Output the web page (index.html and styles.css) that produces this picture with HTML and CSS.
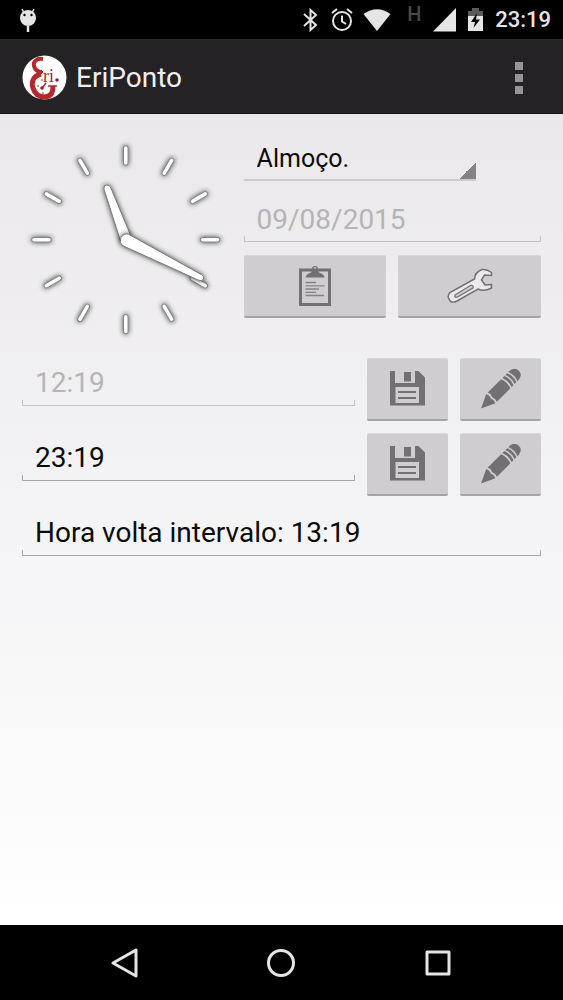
FILE: index.html
```html
<!DOCTYPE html>
<html lang="pt-BR">
<head>
<meta charset="utf-8">
<meta name="viewport" content="width=device-width, initial-scale=1">
<title>EriPonto</title>
<link rel="stylesheet" href="styles.css">
</head>
<body>
<svg class="sprite" aria-hidden="true">
  <symbol id="save" viewBox="0 0 35 35">
    <path fill="#737073" fill-rule="evenodd" d="M0 0H5V12H25V0H28.500L35 6.500V34.500H0ZM5.500 16V32H29V16Z"/>
    <path fill="#737073" d="M14 1H21V10.500H14ZM8 20H26V22H8ZM8 26H26V28H8Z"/>
  </symbol>
  <symbol id="pencil" viewBox="0 0 40 40">
    <g transform="translate(0 39.500) rotate(-45)" fill="#737073">
      <path d="M0 0L14 -6.500Q15.500 -3 14 0Q15.500 3 14 6.500Z"/>
      <path d="M16 -6.500H35Q37.500 0 35 6.500H16Q17.500 3 16 0Q17.500 -3 16 -6.500Z"/>
      <path d="M36.800 -6.500H39.500Q42 0 39.500 6.500H36.800Q39.300 0 36.800 -6.500Z"/>
      <path d="M41 -6.500H43.500Q46 0 43.500 6.500H41Q43.500 0 41 -6.500Z"/>
      <path d="M45.200 -6.500H47Q53.500 -5.500 53.500 0Q53.500 5.500 47 6.500H45.200Q47.700 0 45.200 -6.500Z"/>
    </g>
  </symbol>
</svg>

<header class="status">
  <svg class="droid" width="18" height="24" viewBox="0 0 18 24" aria-hidden="true">
    <path d="M3 1L5 5M15 1L13 5" stroke="#e6e4e6" stroke-width="1.500"/>
    <circle cx="9" cy="10" r="8" fill="#e6e4e6"/>
    <circle cx="5.500" cy="7" r="1.200"/><circle cx="12.500" cy="7" r="1.200"/>
    <path d="M9 18V24" stroke="#e6e4e6" stroke-width="2.500"/>
  </svg>
  <div class="signals">
    <svg width="18" height="24" viewBox="0 0 18 24" fill="none" stroke="#e6e4e6" stroke-width="2" aria-hidden="true">
      <path d="M1 6L13 17L7.500 22V2L13 7L1 18"/>
    </svg>
    <svg width="22" height="24" viewBox="0 0 22 24" fill="none" stroke="#e6e4e6" stroke-width="2" aria-hidden="true">
      <circle cx="11" cy="13" r="9"/><path d="M11 7.500V13.500L15 16M1 5L6 1M21 5L16 1"/>
    </svg>
    <svg width="28" height="24" viewBox="0 0 28 24" fill="#e6e4e6" aria-hidden="true">
      <path d="M.500 6Q14 -3.500 27.500 6L14 23Z"/>
    </svg>
  </div>
  <span class="network">H</span>
  <svg width="23" height="24" viewBox="0 0 23 24" fill="#e6e4e6" aria-hidden="true"><path d="M23 0V23.500H0Z"/></svg>
  <svg width="15" height="24" viewBox="0 0 15 24" aria-hidden="true">
    <path fill="#5c5a5c" d="M0 3H4V0H11V3H15V8H0Z"/><path fill="#e6e4e6" d="M0 8H15V23H0Z"/>
    <path d="M9 5L3 14H7L5.500 20L12 11.500H8Z"/>
  </svg>
  <time class="clock-text">23:19</time>
</header>

<div class="appbar">
  <svg width="45" height="46" viewBox="0 0 45 46" role="img" aria-label="EriPonto">
    <circle cx="22.500" cy="22.500" r="22" fill="#fff"/>
    <g fill="none" stroke="#b22a2c">
      <path stroke-width="4" d="M21 4C14 3 11 7 12 11C13 15 16 17 20 17"/>
      <path stroke-width="2" d="M17 17H21"/>
      <path stroke-width="5" d="M19 19C11 21 9 27 11 33C13 40 18 42 23 42C30 41 31 37 31 31"/>
      <path stroke-width="1.500" d="M26 31H35M20 33L24 28"/>
      <path stroke-width="1" d="M15 31H17M20 24V26M21 37V39"/>
    </g>
    <circle cx="20" cy="33" r="1.800" fill="#8e2338"/>
    <circle cx="35" cy="25" r="1.800" fill="#8e2338"/>
    <text class="logo-text" x="21" y="27">ri</text>
  </svg>
  <h1>EriPonto</h1>
  <button class="more" type="button" aria-label="Mais opções"><i></i><i></i><i></i></button>
</div>

<main>
  <section class="top">
    <svg class="dial" viewBox="0 0 208 208" role="img" aria-label="Relógio">
      <defs>
        <filter id="glow" x="0" y="0" width="208" height="208" filterUnits="userSpaceOnUse">
          <feDropShadow dx="0" dy="0" stdDeviation="2.500" flood-color="#222" flood-opacity=".9"/>
        </filter>
        <path id="tick" d="M104 12V27"/>
        <g id="ticks">
          <use href="#tick"/>
          <use href="#tick" transform="rotate(30 104 104)"/>
          <use href="#tick" transform="rotate(60 104 104)"/>
          <use href="#tick" transform="rotate(90 104 104)"/>
          <use href="#tick" transform="rotate(120 104 104)"/>
          <use href="#tick" transform="rotate(150 104 104)"/>
          <use href="#tick" transform="rotate(180 104 104)"/>
          <use href="#tick" transform="rotate(210 104 104)"/>
          <use href="#tick" transform="rotate(240 104 104)"/>
          <use href="#tick" transform="rotate(270 104 104)"/>
          <use href="#tick" transform="rotate(300 104 104)"/>
          <use href="#tick" transform="rotate(330 104 104)"/>
        </g>
      </defs>
      <g filter="url(#glow)" stroke-linecap="round">
        <use href="#ticks" stroke="#858385" stroke-width="5.500"/>
        <use href="#ticks" stroke="#fff" stroke-width="3.500"/>
      </g>
      <g fill="#fff" stroke="#777577" stroke-width="1">
        <path filter="url(#glow)" d="M82 53Q82 49 85 49Q88 49 89 52L109 100L99 106Z"/>
        <path filter="url(#glow)" d="M107 98.500L180 139Q183 141 182 143.500Q180 146 177 144.500L101 110Q97 107 99 102Q102 97 107 98.500Z"/>
      </g>
    </svg>
    <div class="fields">
      <select class="spinner" aria-label="Tipo de ponto"><option>Almoço.</option></select>
      <input class="field" type="text" value="09/08/2015" aria-label="Data" disabled>
      <div class="pair">
        <button class="btn" type="button" aria-label="Relatório">
          <svg width="32" height="42" viewBox="0 0 32 42" aria-hidden="true">
            <path fill="none" stroke="#737073" stroke-width="3" d="M1.500 5H30.500V39.500H1.500Z"/>
            <path fill="#737073" fill-rule="evenodd" d="M6.500 12.500Q7 9 11 8Q13 7 13 4A3 3 0 0 1 19 4Q19 7 21 8Q25 9 25.500 12.500ZM14.500 3.500A1.500 1.500 0 1 0 17.500 3.500A1.500 1.500 0 1 0 14.500 3.500Z"/>
            <path stroke="#858285" stroke-width="1.300" d="M6.500 17.500H17M6.500 20.800H25.500M6.500 24H20M6.500 27.300H17M6.500 30.500H25"/>
          </svg>
        </button>
        <button class="btn" type="button" aria-label="Configurações">
          <svg width="46" height="36" viewBox="0 0 46 36" fill="#eceaec" stroke="#737073" aria-hidden="true">
            <path stroke-width="1.500" d="M44.500 4.500Q40 1 35 1.500Q28 4 27.500 11L3 24.500Q0 28 2 31Q4 36 10 33L31 21Q37 24 44.500 20V16.500L38 17L34.500 12L37.500 7L44.500 7.500Z"/>
            <path fill="#cfcdcf" stroke-width="1.300" d="M8 27L23.500 17.500Q27 17 26 20L10.500 29Q7 30 8 27Z"/>
          </svg>
        </button>
      </div>
    </div>
  </section>

  <div class="row first">
    <input class="field" type="text" value="12:19" aria-label="Hora de saída" disabled>
    <button class="btn small" type="button" aria-label="Salvar saída"><svg width="35" height="35"><use href="#save"/></svg></button>
    <button class="btn small" type="button" aria-label="Editar saída"><svg width="40" height="40"><use href="#pencil"/></svg></button>
  </div>
  <div class="row">
    <input class="field" type="text" value="23:19" aria-label="Hora de volta">
    <button class="btn small" type="button" aria-label="Salvar volta"><svg width="35" height="35"><use href="#save"/></svg></button>
    <button class="btn small" type="button" aria-label="Editar volta"><svg width="40" height="40"><use href="#pencil"/></svg></button>
  </div>
  <div class="row">
    <input class="field" type="text" value="Hora volta intervalo: 13:19" aria-label="Resumo">
  </div>
</main>

<nav class="navbar">
  <button type="button" aria-label="Voltar"><svg width="30" height="30" viewBox="0 0 30 30"><path d="M3 15L26 2V28Z"/></svg></button>
  <button type="button" aria-label="Início"><svg width="30" height="30" viewBox="0 0 30 30"><circle cx="15" cy="15" r="12.500"/></svg></button>
  <button type="button" aria-label="Recentes"><svg width="30" height="30" viewBox="0 0 30 30"><rect x="4" y="4" width="22" height="22"/></svg></button>
</nav>
</body>
</html>
```
FILE: styles.css
```css
* { box-sizing: border-box; }

body {
  margin: 0;
  min-height: 100vh;
  display: flex;
  flex-direction: column;
  font-family: Roboto, "Noto Sans", sans-serif;
  color: #0c0b0c;
  background: #000;
}

button, input, select {
  font: inherit;
  color: inherit;
  border: 0;
  margin: 0;
  padding: 0;
  border-radius: 0;
  background: none;
}

svg { display: block; flex: none; }
.sprite { position: absolute; width: 0; height: 0; }

.status {
  display: flex;
  align-items: center;
  gap: 12px;
  height: 39px;
  padding: 0 12px 0 19px;
}
.droid { margin-right: auto; }
.signals { display: flex; gap: 10px; margin-right: 4px; }
.network {
  width: 14px;
  font-size: 20px;
  font-weight: 500;
  line-height: 24px;
  padding-bottom: 12px;
  color: #4a484a;
}
.clock-text { font-size: 22px; font-weight: 500; color: #e6e4e6; }

.appbar {
  display: flex;
  align-items: center;
  gap: 9px;
  height: 75px;
  padding: 2px 22px 0;
  background: #242224;
  border-top: 1px solid #2e2c2e;
  border-bottom: 1px solid #181718;
}
.appbar h1 {
  flex: 1;
  margin: 0;
  font-size: 28px;
  font-weight: 400;
  color: #f1eff1;
}
.logo-text {
  font-family: "Liberation Serif", serif;
  font-size: 18px;
  fill: #b22a2c;
}
.more {
  display: flex;
  flex-direction: column;
  align-items: center;
  gap: 4px;
  width: 44px;
}
.more i { width: 8px; height: 8px; background: #969496; }

main {
  flex: 1;
  display: flex;
  flex-direction: column;
  gap: 12px;
  padding: 22px;
  background: linear-gradient(#eae8eb, #f4f3f5 50%, #fff);
}

.top {
  display: grid;
  grid-template-columns: 2fr 3fr;
  align-items: start;
}
.dial { width: 100%; }
.fields {
  min-width: 0;
  display: flex;
  flex-direction: column;
  gap: 13px;
  padding-left: 14px;
}

.spinner {
  appearance: none;
  width: 78%;
  height: 45px;
  padding: 2px 24px 0 13px;
  font-size: 25px;
  border-bottom: 2px solid #cccacc;
  background: linear-gradient(135deg, transparent 50%, #858285 50%) right bottom / 19px 19px no-repeat border-box;
}

.field {
  --line: #a8a6a8;
  width: 100%;
  min-width: 0;
  height: 48px;
  padding: 2px 13px 0;
  font-size: 28px;
  background:
    linear-gradient(var(--line), var(--line)) left bottom / 1px 6px no-repeat,
    linear-gradient(var(--line), var(--line)) right bottom / 1px 6px no-repeat,
    linear-gradient(var(--line), var(--line)) left bottom / 100% 1px no-repeat;
}
.field:disabled { --line: #c4c2c4; color: #b6b4b6; }

.pair { display: flex; gap: 12px; }

.btn {
  flex: 1;
  display: flex;
  align-items: center;
  justify-content: center;
  height: 63px;
  background: #cfcdcf;
  border-top: 1px solid #d9d7d9;
  border-bottom: 2px solid #a5a3a5;
  border-radius: 2px;
}
.btn.small { flex: 0 0 81px; }

.row { display: flex; align-items: flex-start; gap: 12px; }
.row.first { margin-top: 2px; }

.navbar {
  display: flex;
  height: 75px;
  padding: 0 47px;
}
.navbar button {
  flex: 1;
  display: flex;
  align-items: center;
  justify-content: center;
}
.navbar svg {
  fill: none;
  stroke: #e6e4e6;
  stroke-width: 3;
  stroke-linejoin: round;
}
```
